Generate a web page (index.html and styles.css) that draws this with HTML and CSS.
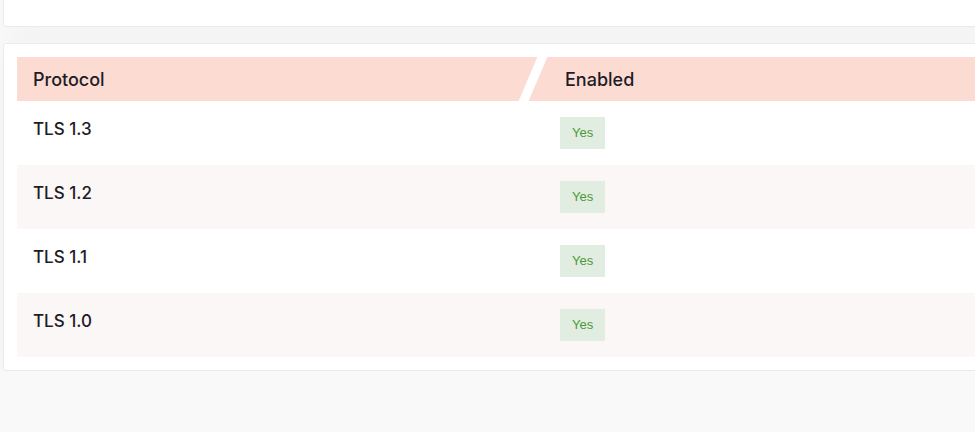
FILE: index.html
```html
<!DOCTYPE html>
<html lang="en">
<head>
<meta charset="utf-8">
<title>TLS Protocols</title>
<link rel="stylesheet" href="styles.css">
</head>
<body>
<div class="page">
  <div class="card card-top"></div>
  <div class="card card-table">
    <div class="table">
      <div class="thead">
        <div class="th th-first">Protocol</div>
        <div class="th th-second">Enabled</div>
      </div>
      <div class="tr">
        <div class="td td-name">TLS 1.3</div>
        <div class="td td-value"><span class="badge">Yes</span></div>
      </div>
      <div class="tr tr-alt">
        <div class="td td-name">TLS 1.2</div>
        <div class="td td-value"><span class="badge">Yes</span></div>
      </div>
      <div class="tr">
        <div class="td td-name">TLS 1.1</div>
        <div class="td td-value"><span class="badge">Yes</span></div>
      </div>
      <div class="tr tr-alt">
        <div class="td td-name">TLS 1.0</div>
        <div class="td td-value"><span class="badge">Yes</span></div>
      </div>
    </div>
  </div>
</div>
</body>
</html>
```
FILE: styles.css
```css
html, body {
  margin: 0;
  padding: 0;
}
body {
  background: #f9f9f9;
  overflow: hidden;
  font-family: Inter, "Noto Sans", sans-serif;
  color: #1e1c27;
}
.page {
  width: 1120px;
  padding: 0 0 0 3px;
  display: flex;
  flex-direction: column;
  gap: 16px;
}
.card {
  background: #fff;
  border: 1px solid #ebebeb;
  border-radius: 3px;
  box-shadow: 0 6px 30px rgba(0, 0, 0, 0.035);
}
.card-top {
  height: 26px;
  border-top: none;
  border-radius: 0 0 3px 3px;
}
.card-table {
  padding: 13px;
}
.table {
  display: flex;
  flex-direction: column;
}
.thead, .tr {
  display: grid;
  grid-template-columns: 527px 1fr;
}
.thead {
  height: 44px;
  background: #fcdcd2;
  align-items: center;
}
.th {
  font-size: 18px;
  font-weight: 500;
  letter-spacing: 0;
}
.th-first {
  padding-left: 16px;
}
.th-second {
  position: relative;
  height: 100%;
  display: flex;
  align-items: center;
  padding-left: 21px;
}
.th-second::before {
  content: "";
  position: absolute;
  left: -16px;
  top: 0;
  bottom: 0;
  width: 10px;
  background: #fff;
  transform: skewX(-23deg);
}
.tr {
  height: 64px;
  box-sizing: border-box;
  padding: 16px 0;
}
.tr-alt {
  background: #fbf7f6;
}
.td {
  line-height: 24px;
}
.td-name {
  padding-left: 16px;
  font-size: 17px;
  font-weight: 500;
}
.td-value {
  padding-left: 16px;
}
.badge {
  display: inline-flex;
  align-items: center;
  height: 32px;
  padding: 0 12px;
  background: #e1ede0;
  color: #4a9a3a;
  font-family: "Liberation Sans", Arial, sans-serif;
  font-size: 13px;
}
```
